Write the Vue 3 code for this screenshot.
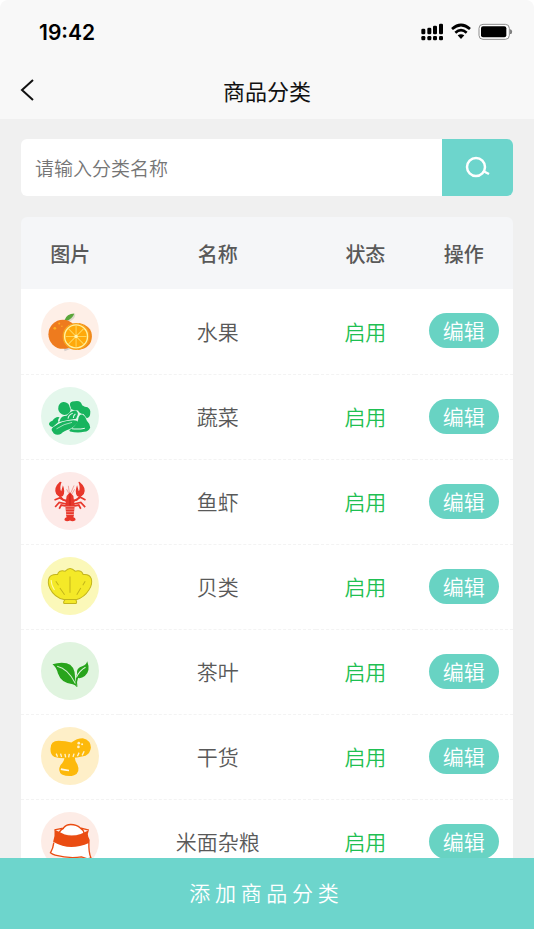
<script setup>
import { ref, computed } from "vue"

const keyword = ref("")
const list = ref([
  { id: 1, icon: "orange", box: "36 22 172 172", bg: "#feefe7", name: "水果", status: "启用" },
  { id: 2, icon: "vegetable", box: "36 22 172 172", bg: "#e4f7ec", name: "蔬菜", status: "启用" },
  { id: 3, icon: "lobster", box: "36 23 172 172", bg: "#fdeae8", name: "鱼虾", status: "启用" },
  { id: 4, icon: "shell", box: "36 24 172 172", bg: "#fbf8b9", name: "贝类", status: "启用" },
  { id: 5, icon: "tea", box: "36 25 172 172", bg: "#e0f4df", name: "茶叶", status: "启用" },
  { id: 6, icon: "mushroom", box: "36 25 172 172", bg: "#feefc8", name: "干货", status: "启用" },
  { id: 7, icon: "sack", box: "126 39 172 172", bg: "#fdece6", name: "米面杂粮", status: "启用" }
])

const shownList = computed(() => {
  return list.value.filter((item) => item.name.includes(keyword.value.trim()))
})
</script>

<template>
  <div class="page">
    <header class="top">
      <div class="status-bar">
        <span class="time">19:42</span>
        <div class="status-icons">
          <svg width="23" height="18" viewBox="0 0 69 54">
            <g fill="#000">
              <rect x="1" y="17" width="12" height="17" rx="4" />
              <rect x="19" y="14" width="12" height="20" rx="4" />
              <rect x="36" y="8" width="12" height="26" rx="4" />
              <rect x="54" y="2" width="12" height="32" rx="4" />
              <rect x="1" y="39" width="12" height="13" rx="4" />
              <rect x="19" y="39" width="12" height="13" rx="4" />
              <rect x="36" y="39" width="12" height="13" rx="4" />
              <rect x="54" y="39" width="12" height="13" rx="4" />
            </g>
          </svg>
          <svg width="20" height="18" viewBox="0 0 60 54">
            <g fill="none" stroke="#000" stroke-width="8">
              <path d="M3 18 Q30 -6 57 18" />
              <path d="M13 29 Q30 14 47 29" />
            </g>
            <path d="M20 37 Q30 30 40 37 L30 48 Z" fill="#000" />
          </svg>
          <svg width="35" height="18" viewBox="0 0 105 54">
            <rect x="3" y="4" width="91" height="45" rx="12" fill="#fff" stroke="#8c8c8c" stroke-width="3" />
            <rect x="9" y="10" width="76" height="33" rx="6" fill="#000" />
            <path d="M98 20 Q104 26 98 33 Z" fill="#777" stroke="#777" stroke-width="3" />
          </svg>
        </div>
      </div>
      <div class="nav">
        <button class="back" type="button" aria-label="返回">
          <svg width="14" height="24" viewBox="0 0 14 24">
            <path d="M13 2 L2 12 L13 22" fill="none" stroke="#111" stroke-width="2" />
          </svg>
        </button>
        <h1 class="title">商品分类</h1>
      </div>
    </header>

    <main class="content">
      <form class="search" @submit.prevent>
        <input
          v-model="keyword"
          class="search-input"
          type="text"
          placeholder="请输入分类名称"
          aria-label="请输入分类名称"
        >
        <button class="search-btn" type="submit" aria-label="搜索">
          <svg width="26" height="24" viewBox="0 0 26 24">
            <circle cx="11" cy="11" r="9" fill="none" stroke="#fff" stroke-width="2.5" />
            <path d="M18 15 L24 18" stroke="#fff" stroke-width="2.5" />
          </svg>
        </button>
      </form>

      <div class="list">
        <table class="table">
          <thead>
            <tr>
              <th class="col">图片</th>
              <th class="col-name">名称</th>
              <th class="col">状态</th>
              <th class="col">操作</th>
            </tr>
          </thead>
          <tbody>
            <tr v-for="item in shownList" :key="item.id">
              <td>
                <div class="picture" :style="{ backgroundColor: item.bg }">
                  <svg width="58" height="58" :viewBox="item.box">
                    <g v-if="item.icon == 'orange'">
                      <path d="M104 150 L118 160 L108 164 Z" fill="#d6cfcd" stroke="#d6cfcd" stroke-width="6" />
                      <path d="M104 76 Q118 54 138 58 Q136 76 116 80 Z" fill="#dcd8cb" />
                      <path d="M106 76 Q112 56 135 56 Q128 74 110 78 Z" fill="#5aa63a" />
                      <circle cx="101" cy="118" r="43" fill="#ee7b1e" />
                      <path d="M148 84 Q187 92 187 124 Q186 158 146 164 Z" fill="#f08a1c" />
                      <circle cx="140" cy="124" r="38" fill="#fff1a0" stroke="#f9a21a" stroke-width="4" />
                      <circle cx="140" cy="124" r="32" fill="#ffa90a" />
                      <path
                        d="M140 93 V155 M109 124 H171 M118 102 L162 146 M162 102 L118 146"
                        stroke="#ffd65c"
                        stroke-width="3"
                      />
                      <circle cx="140" cy="124" r="5" fill="#fff3b5" />
                      <circle cx="77" cy="100" r="4" fill="#ffae22" />
                      <circle cx="90" cy="86" r="3" fill="#ffae22" />
                      <circle cx="98" cy="94" r="2" fill="#ffae22" />
                    </g>
                    <g v-else-if="item.icon == 'vegetable'" fill="#18b45e">
                      <path d="M98 103 Q84 94 88 78 Q94 64 108 67 Q120 70 121 82 Q127 90 120 98 Q110 108 98 103 Z" />
                      <path
                        d="M122 76 Q120 64 136 64 Q154 60 158 76 Q166 82 174 82 Q184 88 182 100
                          Q182 112 172 115 L162 102 Q150 102 146 92 Q134 92 126 88 Z"
                      />
                      <path d="M94 116 Q98 107 112 107 Q126 92 138 92 Q147 96 145 104 L140 116 Q118 118 90 126 Z" />
                      <path d="M60 134 Q58 126 70 122 Q80 108 91 112 Q84 121 88 126 L72 140 Q64 142 60 134 Z" />
                      <path
                        d="M70 154 Q62 146 78 138 Q98 122 126 121 Q144 119 145 127 Q132 144 112 150
                          Q98 156 96 161 Q84 167 74 160 Z"
                      />
                      <path
                        d="M146 120 Q148 102 160 104 Q170 110 172 122 Q182 132 182 142 Q178 154 164 155
                          Q144 159 122 154 L120 150 Q140 138 146 120 Z"
                      />
                      <g fill="none" stroke="#e4f7ec" stroke-width="3">
                        <path d="M82 146 Q104 131 128 127" stroke-width="2" />
                        <path d="M116 116 Q118 104 130 100 M132 114 Q132 106 138 102" />
                        <path d="M128 146 Q148 148 166 144" />
                      </g>
                    </g>
                    <g v-else-if="item.icon == 'lobster'">
                      <g fill="#e8372b">
                        <path d="M92 52 Q72 70 81 88 Q91 101 101 94 Q109 82 101 62 L96 80 Q90 72 97 53 Z" />
                        <path d="M150 52 Q172 70 163 88 Q153 101 143 94 Q135 82 143 62 L148 80 Q154 72 147 53 Z" />
                        <path d="M112 94 L122 82 L132 94 L136 122 L133 150 H111 L108 122 Z" />
                        <path d="M110 150 H134 L132 157 Q140 160 138 166 Q130 172 122 167 Q112 172 106 166 Q104 160 112 157 Z" />
                      </g>
                      <g fill="none" stroke="#e8372b" stroke-width="5">
                        <path d="M90 92 L102 106 L114 108 M154 92 L142 106 L130 108" />
                        <path d="M112 110 L91 100 L76 106 M132 110 L153 98 L168 106" />
                        <path d="M112 118 L90 113 L78 127 M132 118 L154 113 L167 127" />
                        <path d="M112 124 L96 121 L90 132 M132 124 L148 121 L154 132" />
                      </g>
                      <path
                        d="M118 86 L112 74 M120 84 L117 64 M125 84 L134 63 M128 88 L136 74"
                        fill="none"
                        stroke="#e8857b"
                        stroke-width="2"
                      />
                      <path d="M108 126 H136 M109 133 H135 M110 141 H134 M111 149 H133" stroke="#f7b8b0" stroke-width="2" />
                      <path d="M122 88 V122" stroke="#c9231b" stroke-width="3" />
                    </g>
                    <g v-else-if="item.icon == 'shell'" fill="none" stroke="#c3b51c" stroke-width="3">
                      <path
                        d="M104 150 Q76 144 63 118 Q54 100 60 86 Q66 74 85 76 Q88 61 108 66 Q122 50 137 66
                          Q156 61 161 76 Q180 74 185 88 Q190 104 178 122 Q164 144 142 150 L140 152
                          Q144 158 140 162 H104 Q101 158 106 152 Z"
                        fill="#f4e928"
                      />
                      <path d="M104 150 H142" />
                      <path d="M122 82 V130 M80 96 L88 108 M92 116 L106 136 M167 96 L160 108 M154 116 L142 136" />
                      <path d="M66 92 Q66 106 76 122" stroke="#fffbb0" />
                    </g>
                    <g v-else-if="item.icon == 'tea'">
                      <path
                        d="M70 91 Q92 84 112 88 Q136 94 137 128 Q136 140 141 148 L142 159 Q138 152 130 150
                          Q96 148 86 118 Q82 100 70 91 Z"
                        fill="#28a41c"
                      />
                      <path
                        d="M142 158 Q136 136 143 120 Q139 102 160 96 Q170 93 173 82 Q184 110 166 126
                          Q156 134 146 132 Q141 142 144 158 Z"
                        fill="#28a41c"
                      />
                      <path d="M84 97 Q116 104 138 148" fill="none" stroke="#d3f0cf" stroke-width="3" />
                      <path d="M168 100 Q150 110 141 130" fill="none" stroke="#e0f4df" stroke-width="3" />
                    </g>
                    <g v-else-if="item.icon == 'mushroom'">
                      <path
                        d="M64 90 Q64 66 88 66 Q110 66 126 71 Q142 58 160 58 Q184 64 184 86
                          Q182 104 168 110 Q142 117 120 117 Q96 119 76 114 Q64 108 64 90 Z"
                        fill="#fdb90b"
                      />
                      <path d="M106 114 H136 Q136 124 144 136 Q154 160 134 168 Q118 174 98 166 Q84 156 94 138 Q105 128 106 114 Z" fill="#fdb90b" />
                      <path
                        d="M81 104 L85 113 M94 104 L97 114 M107 105 L109 115 M120 105 L118 115 M134 104 L131 114 M149 101 L144 112 M164 97 L158 109"
                        stroke="#fff1cc"
                        stroke-width="4"
                      />
                      <circle cx="148" cy="73" r="4" fill="#fff1cc" />
                      <circle cx="158" cy="76" r="3" fill="#fff1cc" />
                      <circle cx="147" cy="84" r="4" fill="#fff1cc" />
                      <path d="M95 150 Q106 153 119 154" fill="none" stroke="#fff6df" stroke-width="5" />
                    </g>
                    <g v-else>
                      <path
                        d="M164 130 Q162 148 154 160 Q160 165 168 167 Q210 178 246 172 L264 178 L274 175
                          Q267 158 268 130"
                        fill="#fff"
                        stroke="#ea4c12"
                        stroke-width="4"
                      />
                      <path d="M180 98 Q204 76 226 78 Q244 84 254 100 Q218 116 180 98 Z" fill="#fff" />
                      <path
                        d="M166 92 Q180 98 196 106 Q220 112 244 104 L268 93 Q263 104 266 112
                          Q272 122 270 130 Q240 143 216 143 Q190 143 162 127 Q168 112 166 92 Z"
                        fill="#ea4c12"
                      />
                      <path
                        d="M166 92 L192 87 Q200 76 214 76 Q232 76 242 86 L268 93 M180 99 Q186 91 194 87 M242 86 Q252 92 254 102"
                        fill="none"
                        stroke="#ea4c12"
                        stroke-width="4"
                      />
                    </g>
                  </svg>
                </div>
              </td>
              <td>{{ item.name }}</td>
              <td class="enabled">{{ item.status }}</td>
              <td>
                <button class="edit" type="button">编辑</button>
              </td>
            </tr>
          </tbody>
        </table>
      </div>
    </main>

    <button class="add" type="button">添 加 商 品 分 类</button>
  </div>
</template>

<style>
body {
  background-color: #ffffff;
}
</style>

<style scoped>
.page {
  box-sizing: border-box;
  display: flex;
  flex-direction: column;
  height: 100vh;
  padding-bottom: 21px;
  color: #595959;
  font-family: "Noto Sans CJK SC", sans-serif;
  font-size: 21px;
  font-weight: 350;
}

button,
input {
  border: none;
  padding: 0;
  font-family: inherit;
  font-weight: inherit;
}

button {
  cursor: pointer;
}

svg {
  display: block;
}

.top {
  background-color: #f8f8f8;
  border-radius: 8px 8px 0 0;
}

.status-bar {
  display: flex;
  align-items: center;
  justify-content: space-between;
  height: 64px;
  padding: 0 21px 0 39px;
}

.time {
  color: #000000;
  font-family: Inter, sans-serif;
  font-size: 21px;
  font-weight: 600;
}

.status-icons {
  display: flex;
  gap: 7px;
}

.nav {
  box-sizing: border-box;
  display: grid;
  grid-template-columns: 1fr auto 1fr;
  align-items: center;
  height: 55px;
  padding: 0 20px 4px;
}

.back {
  justify-self: start;
  background: none;
}

.title {
  margin: 0;
  color: #111111;
  font-size: 22px;
  font-weight: 400;
}

.content {
  display: flex;
  flex: 1;
  flex-direction: column;
  gap: 21px;
  min-height: 0;
  padding: 20px 21px 0;
  background-color: #f0f0f0;
}

.search {
  display: flex;
  flex-shrink: 0;
  height: 57px;
  overflow: hidden;
  background-color: #ffffff;
  border-radius: 6px;
}

.search-input {
  flex: 1;
  min-width: 0;
  padding: 0 14px;
  background: none;
  color: #595959;
  font-size: 19px;
  outline: none;
}

.search-input::placeholder {
  color: #757575;
}

.search-btn {
  display: flex;
  align-items: center;
  justify-content: center;
  width: 71px;
  background-color: #6dd5cc;
}

.list {
  flex: 1;
  min-height: 0;
  overflow-y: auto;
  scrollbar-width: none;
  background-color: #ffffff;
  border-radius: 6px 6px 0 0;
}

.table {
  width: 100%;
  table-layout: fixed;
  border-collapse: collapse;
  text-align: center;
}

.col {
  width: 20%;
}

.col-name {
  width: 40%;
}

th {
  height: 72px;
  padding: 0;
  background-color: #f5f6f8;
  font-size: 20px;
  font-weight: 500;
}

td {
  box-sizing: border-box;
  height: 85px;
  padding: 0 0 1px;
  border-bottom: 1px dashed #f3f3f3;
}

.picture {
  width: 58px;
  height: 58px;
  margin: 0 auto;
  overflow: hidden;
  border-radius: 50%;
}

.enabled {
  color: #1fc052;
}

.edit {
  width: 70px;
  height: 35px;
  background-color: #68d3c3;
  border-radius: 18px;
  color: #ffffff;
  font-size: 21px;
  line-height: 35px;
}

.add {
  flex-shrink: 0;
  height: 71px;
  padding: 0 6px 4px 0;
  background-color: #6dd5cc;
  color: #ffffff;
  font-size: 21px;
}
</style>
